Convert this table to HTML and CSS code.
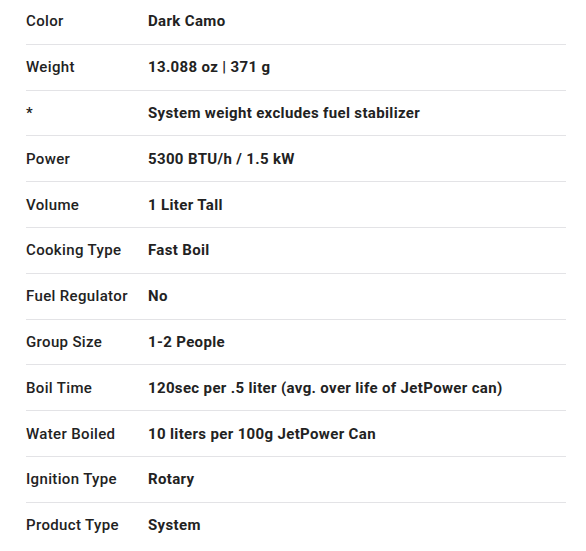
FILE: index.html
```html
<!DOCTYPE html>
<html>
<head>
<meta charset="utf-8">
<link rel="stylesheet" href="styles.css">
</head>
<body>
<table class="specs">
<tbody>
<tr><th>Color</th><td>Dark Camo</td></tr>
<tr><th>Weight</th><td>13.088 oz | 371 g</td></tr>
<tr><th>*</th><td>System weight excludes fuel stabilizer</td></tr>
<tr><th>Power</th><td>5300 BTU/h / 1.5 kW</td></tr>
<tr><th>Volume</th><td>1 Liter Tall</td></tr>
<tr><th>Cooking Type</th><td>Fast Boil</td></tr>
<tr><th>Fuel Regulator</th><td>No</td></tr>
<tr><th>Group Size</th><td>1-2 People</td></tr>
<tr><th>Boil Time</th><td>120sec per .5 liter (avg. over life of JetPower can)</td></tr>
<tr><th>Water Boiled</th><td>10 liters per 100g JetPower Can</td></tr>
<tr><th>Ignition Type</th><td>Rotary</td></tr>
<tr><th>Product Type</th><td>System</td></tr>
</tbody>
</table>
</body>
</html>
```
FILE: styles.css
```css
html, body {
  margin: 0;
  padding: 0;
  background: #ffffff;
}
body {
  padding: 0 20px 0 26px;
  font-family: Roboto, "Liberation Sans", sans-serif;
  color: #222222;
  font-size: 15px;
  letter-spacing: 0.35px;
}
.specs {
  width: 540px;
  border-collapse: collapse;
}
.specs tr {
  border-bottom: 1px solid #e3e3e6;
}
.specs tr:last-child {
  border-bottom: none;
}
.specs th, .specs td {
  height: 44.8px;
  padding: 0;
  text-align: left;
  vertical-align: middle;
  line-height: 18px;
}
.specs tr:first-child th, .specs tr:first-child td {
  height: 42.8px;
  padding-bottom: 1px;
}
.specs th {
  width: 122px;
  font-weight: 500;
}
.specs td {
  font-weight: 700;
}
```
